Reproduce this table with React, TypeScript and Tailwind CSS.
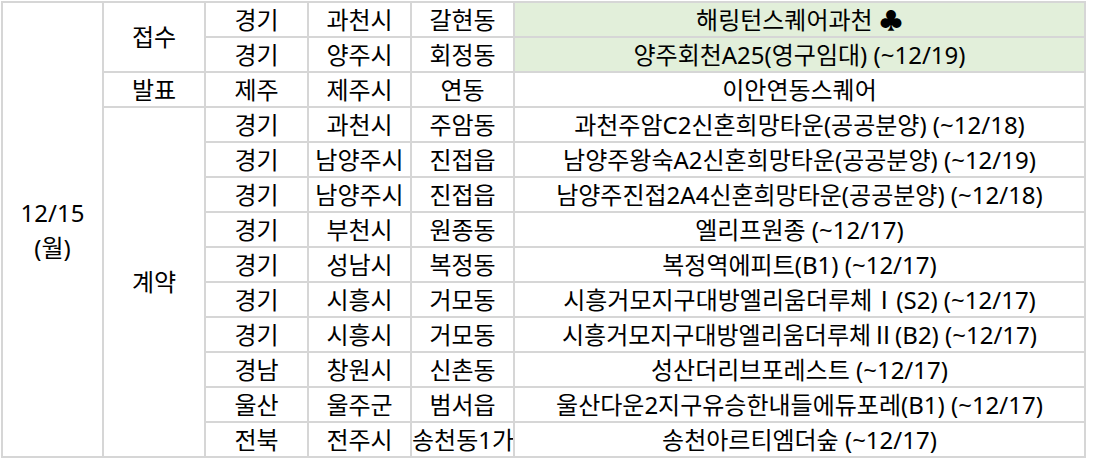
const rows: Array<{ group?: { label: string; span: number }; prov: string; city: string; dong: string; name: React.ReactNode; green?: boolean }> = [
  { group: { label: '접수', span: 2 }, prov: '경기', city: '과천시', dong: '갈현동', name: '해링턴스퀘어과천 ♣', green: true },
  { prov: '경기', city: '양주시', dong: '회정동', name: '양주회천A25(영구임대) (~12/19)', green: true },
  { group: { label: '발표', span: 1 }, prov: '제주', city: '제주시', dong: '연동', name: '이안연동스퀘어' },
  { group: { label: '계약', span: 10 }, prov: '경기', city: '과천시', dong: '주암동', name: '과천주암C2신혼희망타운(공공분양) (~12/18)' },
  { prov: '경기', city: '남양주시', dong: '진접읍', name: '남양주왕숙A2신혼희망타운(공공분양) (~12/19)' },
  { prov: '경기', city: '남양주시', dong: '진접읍', name: '남양주진접2A4신혼희망타운(공공분양) (~12/18)' },
  { prov: '경기', city: '부천시', dong: '원종동', name: '엘리프원종 (~12/17)' },
  { prov: '경기', city: '성남시', dong: '복정동', name: '복정역에피트(B1) (~12/17)' },
  {
    prov: '경기', city: '시흥시', dong: '거모동',
    name: <>시흥거모지구대방엘리움더루체<span className="font-['Noto_Sans_CJK_KR',sans-serif]">Ⅰ</span>(S2) (~12/17)</>,
  },
  {
    prov: '경기', city: '시흥시', dong: '거모동',
    name: <>시흥거모지구대방엘리움더루체<span className="font-['Noto_Sans_CJK_KR',sans-serif]">Ⅱ</span>(B2) (~12/17)</>,
  },
  { prov: '경남', city: '창원시', dong: '신촌동', name: '성산더리브포레스트 (~12/17)' },
  { prov: '울산', city: '울주군', dong: '범서읍', name: '울산다운2지구유승한내들에듀포레(B1) (~12/17)' },
  { prov: '전북', city: '전주시', dong: '송천동1가', name: '송천아르티엠더숲 (~12/17)' },
];

const cell = 'border-2 border-[#d6d6d6] text-center align-middle p-0 whitespace-nowrap overflow-hidden';

export default function App() {
  return (
    <div className="w-[1096px] h-[458px] overflow-hidden bg-white pt-[1px] pl-[1px]">
      <table className="table-fixed border-collapse w-[1085px] text-[24px] leading-[30px] text-black font-['Noto_Sans','Noto_Sans_CJK_KR',sans-serif]">
        <colgroup>
          <col className="w-[101px]" />
          <col className="w-[102px]" />
          <col className="w-[103px]" />
          <col className="w-[103px]" />
          <col className="w-[103px]" />
          <col />
        </colgroup>
        <tbody>
          {rows.map((r, i) => (
            <tr key={i} className="h-[35px]">
              {i === 0 && (
                <td rowSpan={rows.length} className={`${cell} leading-[35px]`}>
                  12/15
                  <br />
                  (월)
                </td>
              )}
              {r.group && (
                <td rowSpan={r.group.span} className={cell}>
                  {r.group.label}
                </td>
              )}
              <td className={cell}>{r.prov}</td>
              <td className={cell}>{r.city}</td>
              <td className={cell}>{r.dong}</td>
              <td className={`${cell} ${r.green ? 'bg-[#e2efda]' : ''}`}>{r.name}</td>
            </tr>
          ))}
        </tbody>
      </table>
    </div>
  );
}
